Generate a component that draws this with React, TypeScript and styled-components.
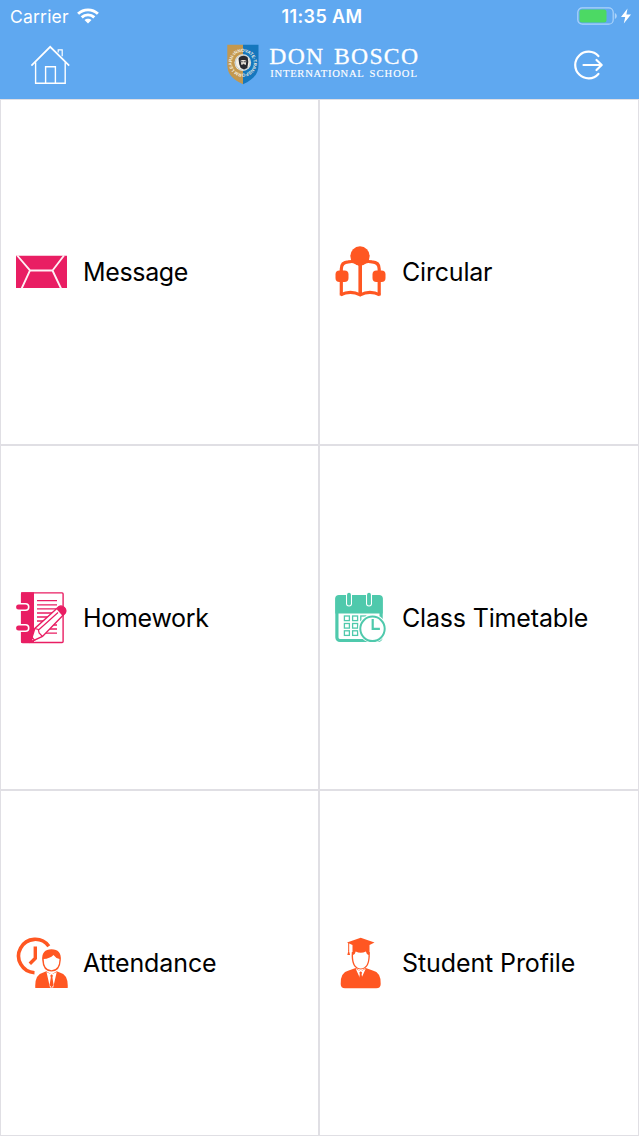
import type { ReactNode } from 'react'
import styled, { createGlobalStyle } from 'styled-components'

const PINK = '#e91e63'
const ORANGE = '#ff5722'
const TEAL = '#4fc9ac'
const BLUE = '#5fa8f0'

const GlobalStyle = createGlobalStyle`
	* {
		box-sizing: border-box;
	}

	body {
		margin: 0;
		background: white;
		font-family: Inter, 'Liberation Sans', sans-serif;
	}
`

const Screen = styled.div`
	display: flex;
	flex-direction: column;
	width: 639px;
	height: 1136px;
	overflow: hidden;
`

const Header = styled.header`
	height: 99px;
	flex: none;
	background: ${BLUE};
	color: white;
`

const StatusBar = styled.div`
	display: grid;
	grid-template-columns: 1fr auto 1fr;
	align-items: center;
	height: 32px;
	padding: 0 8px 0 10px;
`

const Carrier = styled.div`
	display: flex;
	align-items: center;
	gap: 8px;
	font-size: 17.5px;
	letter-spacing: 0.2px;
`

const Time = styled.div`
	padding-left: 3px;
	font-size: 18px;
	font-weight: 600;
	letter-spacing: 0.4px;
`

const Battery = styled.div`
	display: flex;
	justify-content: flex-end;
	align-items: center;
	gap: 4px;
`

const NavBar = styled.nav`
	display: flex;
	justify-content: space-between;
	align-items: center;
	height: 66px;
	padding: 0 35px 0 30px;
`

const IconButton = styled.button`
	display: flex;
	padding: 0;
	border: 0;
	background: none;
	color: white;
`

const Brand = styled.div`
	display: flex;
	align-items: center;
	gap: 10px;
	padding-left: 3px;
`

const Menu = styled.main`
	display: grid;
	flex: 1;
	grid-template-columns: 317px 1fr;
	grid-template-rows: 344px 343px 1fr;
	gap: 2px;
	padding: 1px;
	background: #e0dfe4;
`

const Cell = styled.a`
	display: flex;
	align-items: center;
	gap: 15px;
	padding-left: 15px;
	background: white;
	color: black;
`

const Label = styled.span<{ $spacing: number }>`
	font-size: 25px;
	line-height: 32px;
	white-space: nowrap;
	letter-spacing: ${({ $spacing }) => $spacing}px;
`

const Glyph = styled.svg`
	display: block;
	flex: none;
`

const MenuIcon = ({ children }: { children: ReactNode }) => (
	<Glyph width="52" height="52" viewBox="0 0 52 52" fill="none">
		{children}
	</Glyph>
)

const WifiIcon = () => (
	<Glyph width="22" height="16" viewBox="0 0 22 16" fill="none" stroke="white" strokeWidth="2.9">
		<path d="M1.1 5.8C6.6.5 15.4.5 20.9 5.8" />
		<path d="M4.7 9.4c3.5-3.4 9.1-3.4 12.6 0" />
		<path d="M11 15.5 7.5 12c1.9-1.8 5.1-1.8 7 0Z" fill="white" stroke="none" />
	</Glyph>
)

const BatteryIcon = () => (
	<Glyph width="40" height="18" viewBox="0 0 40 18" fill="none">
		<rect x=".8" y=".8" width="35.4" height="16.4" rx="4.5" stroke="#add4fa" strokeWidth="1.2" />
		<rect x="2.5" y="2.6" width="27" height="12.8" rx="2.5" fill="#4cd964" />
		<path d="M37.8 6c2.6 1 2.6 5 0 6Z" fill="#add4fa" />
	</Glyph>
)

const BoltIcon = () => (
	<Glyph width="10" height="16" viewBox="0 0 10 16" fill="white">
		<path d="M6.5.5 0 9h4.2L2.8 15.5 10 6.4H5.4Z" />
	</Glyph>
)

const HomeIcon = () => (
	<Glyph width="40" height="40" viewBox="0 0 40 40" fill="none" stroke="white" strokeWidth="1.4">
		<path d="M1.4 20.6 20.2 1.8 39.2 20.6" strokeWidth="1.7" />
		<path d="M5.6 17.3v21h29.6v-21M15.6 38.3V21.7h9.8v16.6" />
		<path d="M28.2 7.5V4.8h4v6.4" strokeWidth="1.2" />
	</Glyph>
)

const LogoutIcon = () => (
	<Glyph width="31" height="32" viewBox="0 0 31 32" fill="none" stroke="white" strokeWidth="2.2" strokeLinecap="round" strokeLinejoin="round">
		<path d="M25.4 7.1a13.3 13.3 0 1 0 0 17.8" />
		<path d="M10.5 16h18M23.5 11l5.2 5-5.2 5" />
	</Glyph>
)

const Shield = () => (
	<Glyph width="32" height="42" viewBox="0 0 32 42" fill="none">
		<path d="M.3.8H16v39.5C6.5 36 .3 30.5.3 21Z" fill="#c3984f" />
		<path d="M16 .8h15.5V21C31.5 30.5 25.5 36 16 40.3Z" fill="#1577bd" />
		<defs>
			<path id="motto" d="M7.8 26.3A10.9 10.9 0 1 1 23.6 26.3A10.9 10.9 0 0 1 7.8 26.3" />
		</defs>
		<text fill="#f3efe2" fontFamily="Liberation Sans, sans-serif" fontSize="4.5" fontWeight="700" textLength="67">
			<textPath href="#motto" textLength="67">LEARN·INNOVATE·TRANSFORM</textPath>
		</text>
		<circle cx="15.8" cy="18.6" r="8.3" fill="#f5f0e6" />
		<circle cx="15.8" cy="18.6" r="7.4" stroke="#6b98b5" strokeWidth=".4" />
		<path d="M11.5 14.8c.8-3.6 7.500-4.200 9.300-1l.5 4.200-1 6-3.300 1.500-3.300-1.500-1.500-4Z" fill="#282a30" />
		<path d="M13.5 16.8c.8-1.2 4.8-1.2 5.8 0l-.5 4.2-1.8-.8-2.5.8Z" fill="#eee8df" />
		<path d="M13.6 17.8h2.2m.8 0h2.4m-3.4 2.5h1.6" stroke="#282a30" strokeWidth=".9" />
	</Glyph>
)

const Wordmark = () => (
	<Glyph width="150" height="50" viewBox="0 -5 150 50" fill="white" fontFamily="Liberation Serif, serif">
		<g fontSize="23.7" stroke="white" strokeWidth=".3">
			<text x=".2" y="19" textLength="54">DON</text>
			<text x="65" y="19" textLength="84">BOSCO</text>
		</g>
		<g fontSize="10.6" stroke="white" strokeWidth=".15">
			<text x="1.3" y="32" textLength="93.5">INTERNATIONAL</text>
			<text x="100.500" y="32" textLength="47.5">SCHOOL</text>
		</g>
	</Glyph>
)

const MessageIcon = () => (
	<MenuIcon>
		<path d="M0 9.7h51V42H0Z" fill={PINK} />
		<path d="M1.2 9.5 14 24.5 5.7 42.3M48 9.5 36.5 24.5 45 42.3M14 24.5h22.5" stroke="#fff0f5" strokeWidth="1.9" />
	</MenuIcon>
)

const CircularIcon = () => (
	<MenuIcon>
		<circle cx="25" cy="10" r="9.7" fill={ORANGE} />
		<path d="M6.3 49.5V23q0-7 7-7.2Q21 14.500 25 18.500 29 14.500 37 15.800q7.200.2 7.200 7.200v26.500" stroke={ORANGE} strokeWidth="3.2" />
		<path d="M16 15.5 25 12l9.5 3.5-6 .7-3.5 4-3.5-4Z" fill={ORANGE} />
		<path d="M25.2 17v32" stroke={ORANGE} strokeWidth="3.6" />
		<path d="M5.5 48.9q10-5 19.7 0 9.7-5 19.7 0" stroke={ORANGE} strokeWidth="3.2" />
		<rect x=".5" y="24.5" width="13" height="11.5" rx="4" fill={ORANGE} />
		<rect x="37.5" y="24.5" width="13" height="11.5" rx="4" fill={ORANGE} />
	</MenuIcon>
)

const HomeworkIcon = () => (
	<MenuIcon>
		<rect x="5.6" y=".9" width="41.5" height="49.6" rx="1" stroke={PINK} strokeWidth="1.4" />
		<path d="M5 .3h13v50.4H5Z" fill={PINK} />
		{[15, 36].map((y) => (
			<g key={y} strokeLinecap="round">
				<path d={`M3 ${y}h6.5`} stroke="white" strokeWidth="8" />
				<path d={`M2.6 ${y}h6.8`} stroke={PINK} strokeWidth="5" />
			</g>
		))}
		<path d="M21 8.7h20M21 12.8h20M21 16.9h20M21 21h16M21 25h12M21 29h8M34 33h7M31 37h10M28 41.2h13" stroke={PINK} strokeWidth="1.3" />
		<path d="m14.6 50 4.2-13.5L43 14.6q2.5-1.8 5.2 1t1 5.5L26.5 44.5Z" fill="white" stroke={PINK} strokeWidth="1.4" />
		<path d="m40.5 16.9 2.6-2.3q2.5-1.8 5.2 1t1 5.5l-2.7 2.8Z" fill={PINK} />
		<path d="m18.8 36.5 3.5 1 .8 3.5 3.4 3.5M22.5 38 42 20.5M15 49.5l3.5-1.3-2.2-2.7Z" stroke={PINK} strokeWidth="1.2" />
	</MenuIcon>
)

const TimetableIcon = () => (
	<MenuIcon>
		<rect x="1.9" y="4.6" width="44.2" height="43.9" rx="3" fill="white" stroke={TEAL} strokeWidth="3.2" />
		<path d="M.3 6.3q0-3 3-3H44.7q3 0 3 3v15.2H.3Z" fill={TEAL} />
		{[14, 34].map((x) => (
			<g key={x} strokeLinecap="round">
				<path d={`M${x} 3v8.5`} stroke="white" strokeWidth="6" />
				<path d={`M${x} 2.7v8.8`} stroke={TEAL} strokeWidth="3.9" />
			</g>
		))}
		{[24, 31.5, 38.8].map((y) =>
			[9.4, 17.6, 25.8, 34].map((x) => (
				<rect key={`${x}-${y}`} x={x} y={y} width="5" height="4.6" stroke={TEAL} strokeWidth="1.3" />
			))
		)}
		<circle cx="37.5" cy="36.8" r="14.2" fill="white" />
		<circle cx="37.5" cy="36.8" r="12.2" fill="white" stroke={TEAL} strokeWidth="2" />
		<path d="M37.7 27v9.9h7.2" stroke={TEAL} strokeWidth="2.2" />
	</MenuIcon>
)

const AttendanceIcon = () => (
	<MenuIcon>
		<path d="M32.8 9.2A16.7 16.7 0 1 0 18.5 35.7" stroke={ORANGE} strokeWidth="3.6" />
		<path d="M19.3 9.5v11.8l-5.5 5.5" stroke={ORANGE} strokeWidth="3.4" />
		<ellipse cx="35.5" cy="23.5" rx="11" ry="12.6" fill="white" />
		<path d="M26.2 23q-.7-10.8 9.3-10.800T44.8 23q-.5 11.500-9.300 11.500T26.200 23Z" fill={ORANGE} />
		<path d="M27.7 22q6-.3 9.8-4 2.5 3.5 6 4-.2 11.2-8 11.200t-7.800-11.200Z" fill="white" />
		<path d="M19.3 51q-.8-13.5 8-15.5l3-1.2 5.2 3.2 5.2-3.2 3 1.2q8.8 2 8 15.5Z" fill={ORANGE} />
		<path d="m30.5 35 3.5 15.5h3.2L40.7 35l-5.1 2.5Z" fill="white" />
		<path d="m34.3 38.5 1.3-1 1.3 1-.5 2 1.2 7.5-2 2.5-2-2.5 1.2-7.5Z" fill={ORANGE} />
	</MenuIcon>
)

const ProfileIcon = () => (
	<MenuIcon>
		<path d="M12 5.5 25.7.8 39.5 5.5l-5 2.5v9.5h-17V8Z" fill={ORANGE} />
		<path d="M13.7 6v8" stroke={ORANGE} strokeWidth="1" />
		<path d="m13.7 12.5 1.4 5.5h-2.8Z" fill={ORANGE} />
		<path d="M16.8 15q-1.3 17 8.9 17.5Q35.8 32 34.7 15Z" fill={ORANGE} />
		<path d="M18 18q2-.2 2.7-3.5 5 2.7 10.2 0 .7 3.3 2.6 3.5 0 13-7.8 13.5Q18 31 18 18Z" fill="white" />
		<path d="M5.7 47q-.5-11.5 8-13.5l7-2.5 5 3.5 5-3.5 7 2.5q8.5 2 8 13.5 0 4.2-4.5 4.2H10q-4.3 0-4.3-4.2Z" fill={ORANGE} />
		<path d="m20.7 31.8 5 11 5-11-5 2.700Z" fill="white" />
		<path d="m24.3 35.5 1.4-1 1.4 1-.5 1.7.7 4-1.6 3-1.6-3 .7-4Z" fill={ORANGE} />
	</MenuIcon>
)

const ITEMS = [
	{ label: 'Message', spacing: -0.35, icon: <MessageIcon /> },
	{ label: 'Circular', spacing: -0.2, icon: <CircularIcon /> },
	{ label: 'Homework', spacing: -0.3, icon: <HomeworkIcon /> },
	{ label: 'Class Timetable', spacing: -0.17, icon: <TimetableIcon /> },
	{ label: 'Attendance', spacing: -0.1, icon: <AttendanceIcon /> },
	{ label: 'Student Profile', spacing: -0.1, icon: <ProfileIcon /> },
]

const App = () => (
	<Screen>
		<GlobalStyle />
		<Header>
			<StatusBar>
				<Carrier>
					Carrier
					<WifiIcon />
				</Carrier>
				<Time>11:35 AM</Time>
				<Battery>
					<BatteryIcon />
					<BoltIcon />
				</Battery>
			</StatusBar>
			<NavBar>
				<IconButton aria-label="Home">
					<HomeIcon />
				</IconButton>
				<Brand>
					<Shield />
					<Wordmark />
				</Brand>
				<IconButton aria-label="Log out">
					<LogoutIcon />
				</IconButton>
			</NavBar>
		</Header>
		<Menu>
			{ITEMS.map(({ label, spacing, icon }) => (
				<Cell key={label}>
					{icon}
					<Label $spacing={spacing}>{label}</Label>
				</Cell>
			))}
		</Menu>
	</Screen>
)

export default App
